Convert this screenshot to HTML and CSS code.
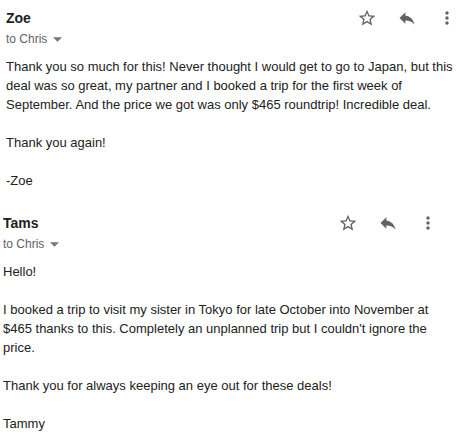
FILE: index.html
```html
<!DOCTYPE html>
<html>
<head>
<meta charset="utf-8">
<link rel="stylesheet" href="styles.css">
</head>
<body>
<div class="msg msg-first">
  <div class="head">
    <div class="who">
      <div class="name">Zoe</div>
      <div class="to">to Chris <svg class="caret" viewBox="0 0 10 5" width="9" height="5"><path d="M0 0h10L5 5z"/></svg></div>
    </div>
    <div class="actions">
      <svg class="ic" viewBox="0 0 24 24"><path d="M22 9.24l-7.19-.62L12 2 9.19 8.63 2 9.24l5.46 4.73L5.82 21 12 17.27 18.18 21l-1.63-7.03L22 9.24zM12 15.4l-3.76 2.27 1-4.28-3.32-2.88 4.38-.38L12 6.1l1.71 4.04 4.38.38-3.32 2.88 1 4.28L12 15.4z"/></svg>
      <svg class="ic" viewBox="0 0 24 24"><path d="M10 9V5l-7 7 7 7v-4.1c5 0 8.5 1.6 11 5.1-1-5-4-10-11-11z"/></svg>
      <svg class="ic" viewBox="0 0 24 24"><path d="M12 8c1.1 0 2-.9 2-2s-.9-2-2-2-2 .9-2 2 .9 2 2 2zm0 2c-1.1 0-2 .9-2 2s.9 2 2 2 2-.9 2-2-.9-2-2-2zm0 6c-1.1 0-2 .9-2 2s.9 2 2 2 2-.9 2-2-.9-2-2-2z"/></svg>
    </div>
  </div>
  <div class="body">
    <p>Thank you so much for this! Never thought I would get to go to Japan, but this deal was so great, my partner and I booked a trip for the first week of September. And the price we got was only $465 roundtrip! Incredible deal.</p>
    <p>Thank you again!</p>
    <p>-Zoe</p>
  </div>
</div>
<div class="msg msg-second">
  <div class="head">
    <div class="who">
      <div class="name">Tams</div>
      <div class="to">to Chris <svg class="caret" viewBox="0 0 10 5" width="9" height="5"><path d="M0 0h10L5 5z"/></svg></div>
    </div>
    <div class="actions">
      <svg class="ic" viewBox="0 0 24 24"><path d="M22 9.24l-7.19-.62L12 2 9.19 8.63 2 9.24l5.46 4.73L5.82 21 12 17.27 18.18 21l-1.63-7.03L22 9.24zM12 15.4l-3.76 2.27 1-4.28-3.32-2.88 4.38-.38L12 6.1l1.71 4.04 4.38.38-3.32 2.88 1 4.28L12 15.4z"/></svg>
      <svg class="ic" viewBox="0 0 24 24"><path d="M10 9V5l-7 7 7 7v-4.1c5 0 8.5 1.6 11 5.1-1-5-4-10-11-11z"/></svg>
      <svg class="ic" viewBox="0 0 24 24"><path d="M12 8c1.1 0 2-.9 2-2s-.9-2-2-2-2 .9-2 2 .9 2 2 2zm0 2c-1.1 0-2 .9-2 2s.9 2 2 2 2-.9 2-2-.9-2-2-2zm0 6c-1.1 0-2 .9-2 2s.9 2 2 2 2-.9 2-2-.9-2-2-2z"/></svg>
    </div>
  </div>
  <div class="body">
    <p>Hello!</p>
    <p>I booked a trip to visit my sister in Tokyo for late October into November at $465 thanks to this. Completely an unplanned trip but I couldn't ignore the price.</p>
    <p>Thank you for always keeping an eye out for these deals!</p>
    <p>Tammy</p>
  </div>
</div>
</body>
</html>
```
FILE: styles.css
```css
html, body {
  margin: 0;
  padding: 0;
  background: #fff;
}
body {
  width: 457px;
  height: 442px;
  overflow: hidden;
  font-family: "Liberation Sans", Arial, sans-serif;
  color: #222;
}
.msg {
  padding-top: 8px;
}
.msg-first {
  padding-left: 6px;
  padding-right: 0;
}
.msg-second {
  padding-top: 23px;
  padding-left: 3px;
  padding-right: 19px;
}
.head {
  display: flex;
  justify-content: space-between;
  align-items: flex-start;
}
.name {
  font-weight: bold;
  font-size: 14px;
  line-height: 20px;
  color: #202124;
}
.to {
  margin-top: 3px;
  font-size: 12px;
  line-height: 16px;
  color: #5f6368;
  display: flex;
  align-items: center;
  gap: 6px;
}
.caret {
  fill: #777;
  width: 9px;
  height: 5px;
}
.actions {
  display: flex;
  gap: 20px;
}
.ic {
  width: 20px;
  height: 20px;
  fill: #5f6368;
}
.body {
  margin-top: 10px;
  font-size: 13px;
  line-height: 19px;
}
.msg-first .body {
  margin-right: -4px;
}
.body p {
  margin: 0 0 19px 0;
}
.body p:last-child {
  margin-bottom: 0;
}
```
